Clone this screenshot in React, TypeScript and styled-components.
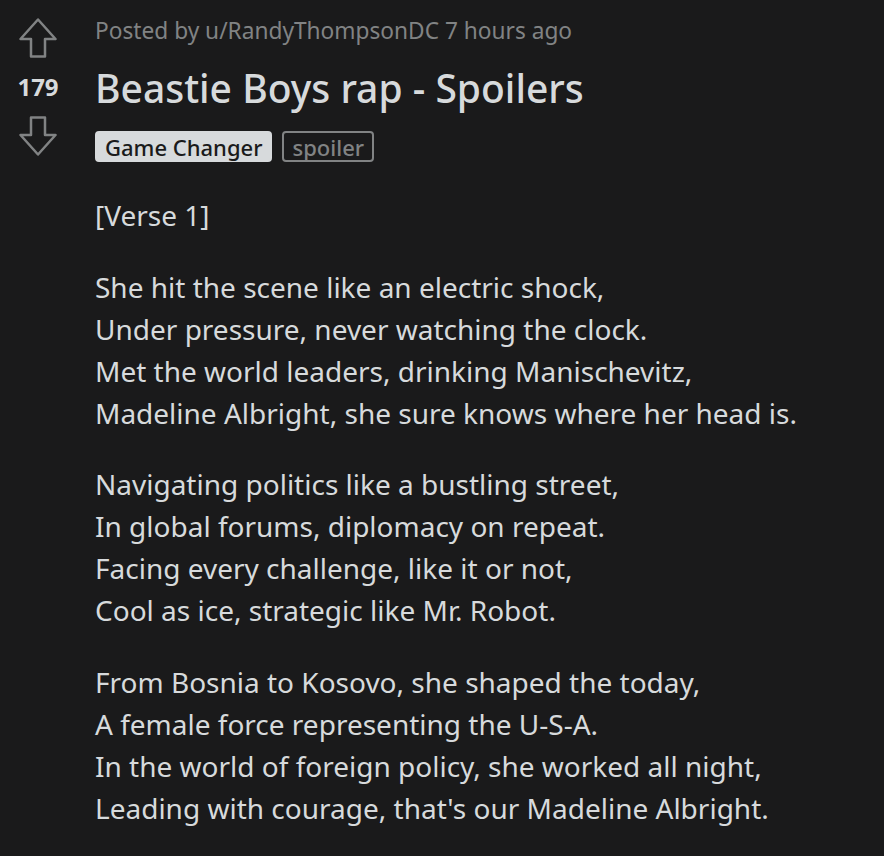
import React from "react";
import styled, { createGlobalStyle } from "styled-components";

const Global = createGlobalStyle`
  html, body { margin: 0; padding: 0; background: #1a1a1b; }
  body { font-family: "Noto Sans", "Liberation Sans", sans-serif; }
`;

const Page = styled.div`
  display: flex;
  align-items: flex-start;
  background: #1a1a1b;
  min-height: 856px;
  width: 884px;
  box-sizing: border-box;
  padding: 15px 0 0 0;
`;

const VoteColumn = styled.div`
  width: 76px;
  display: flex;
  flex-direction: column;
  align-items: center;
  gap: 15px;
  padding-top: 3px;
`;

const VoteButton = styled.button`
  background: none;
  border: 0;
  padding: 0;
  width: 40px;
  height: 40px;
  display: flex;
  align-items: center;
  justify-content: center;
  color: #818384;
`;

const Score = styled.span`
  font-family: "Noto Sans", sans-serif;
  font-weight: 700;
  font-size: 24px;
  line-height: 28px;
  color: #d7dadc;
`;

const Main = styled.div`
  flex: 1;
  padding-left: 19px;
  padding-right: 20px;
`;

const Meta = styled.div`
  font-size: 22.7px;
  line-height: 32px;
  color: #818384;
`;

const Title = styled.h1`
  margin: 17px 0 0 0;
  font-size: 39px;
  font-weight: 500;
  line-height: 48px;
  color: #d7dadc;
`;

const FlairRow = styled.div`
  display: flex;
  gap: 10px;
  margin-top: 19px;
`;

const Flair = styled.span<{ $variant: "solid" | "outline" }>`
  display: inline-flex;
  align-items: center;
  height: 31px;
  box-sizing: border-box;
  padding: 0 8px;
  border-radius: 4px;
  font-size: 22px;
  font-weight: 500;
  background: ${(p) => (p.$variant === "solid" ? "#d7dadc" : "transparent")};
  color: ${(p) => (p.$variant === "solid" ? "#1a1a1b" : "#818384")};
  border: 2px solid ${(p) => (p.$variant === "solid" ? "#d7dadc" : "#818384")};
`;

const Body = styled.div`
  margin-top: 32px;
  color: #d7dadc;
  font-size: 28px;
  line-height: 42px;
`;

const Para = styled.p`
  margin: 0 0 29.5px 0;
`;

const Up = () => (
  <svg width="40" height="40" viewBox="0 0 40 40" fill="none" stroke="currentColor" strokeWidth="2.5" strokeLinejoin="round">
    <path d="M20 1.5 L37.5 21 H27 V38.5 H13 V21 H2.5 Z" />
  </svg>
);

const Down = () => (
  <svg width="40" height="40" viewBox="0 0 40 40" fill="none" stroke="currentColor" strokeWidth="2.5" strokeLinejoin="round">
    <path d="M20 38.5 L37.5 19 H27 V1.5 H13 V19 H2.5 Z" />
  </svg>
);

const paragraphs = [
  ["[Verse 1]"],
  [
    "She hit the scene like an electric shock,",
    "Under pressure, never watching the clock.",
    "Met the world leaders, drinking Manischevitz,",
    "Madeline Albright, she sure knows where her head is.",
  ],
  [
    "Navigating politics like a bustling street,",
    "In global forums, diplomacy on repeat.",
    "Facing every challenge, like it or not,",
    "Cool as ice, strategic like Mr. Robot.",
  ],
  [
    "From Bosnia to Kosovo, she shaped the today,",
    "A female force representing the U-S-A.",
    "In the world of foreign policy, she worked all night,",
    "Leading with courage, that's our Madeline Albright.",
  ],
];

export default function App() {
  return (
    <>
      <Global />
      <Page>
        <VoteColumn>
          <VoteButton aria-label="upvote"><Up /></VoteButton>
          <Score>179</Score>
          <VoteButton aria-label="downvote"><Down /></VoteButton>
        </VoteColumn>
        <Main>
          <Meta>Posted by u/RandyThompsonDC 7 hours ago</Meta>
          <Title>Beastie Boys rap - Spoilers</Title>
          <FlairRow>
            <Flair $variant="solid">Game Changer</Flair>
            <Flair $variant="outline">spoiler</Flair>
          </FlairRow>
          <Body>
            {paragraphs.map((lines, i) => (
              <Para key={i}>
                {lines.map((l, j) => (
                  <React.Fragment key={j}>
                    {l}
                    {j < lines.length - 1 && <br />}
                  </React.Fragment>
                ))}
              </Para>
            ))}
          </Body>
        </Main>
      </Page>
    </>
  );
}
